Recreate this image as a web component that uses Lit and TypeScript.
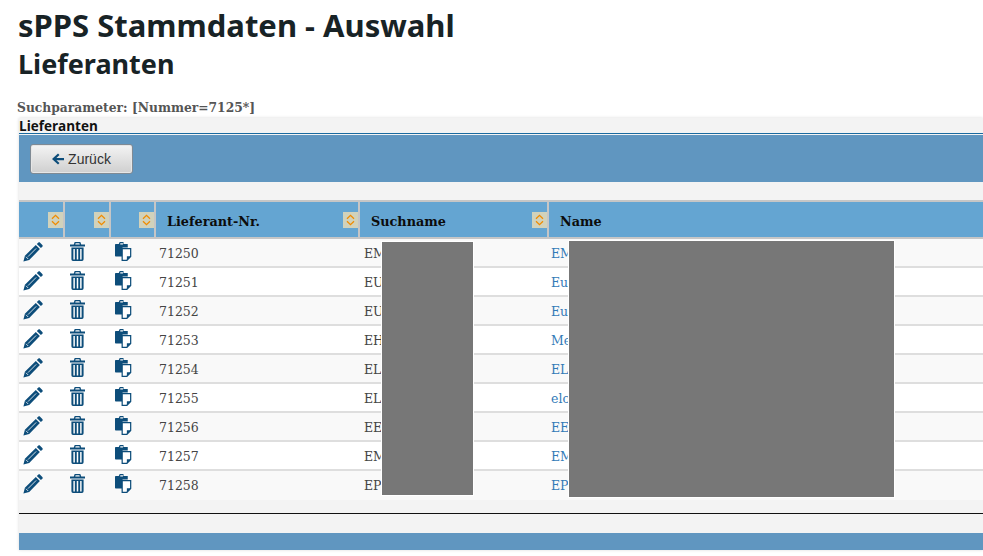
import { LitElement, css, html } from 'lit';
import { customElement } from 'lit/decorators.js';

const rows = [
  ['71250', 'EM', 'EM'],
  ['71251', 'EU', 'Eu'],
  ['71252', 'EU', 'Eu'],
  ['71253', 'EH', 'Me'],
  ['71254', 'EL', 'EL'],
  ['71255', 'EL', 'elc'],
  ['71256', 'EE', 'EE'],
  ['71257', 'EM', 'EM'],
  ['71258', 'EP', 'EP'],
];

const sortIcon = html`
  <span class="sort">
    <svg width="9" height="12" viewBox="0 0 9 12" fill="none" stroke="#f08c00" stroke-width="1.3">
      <path d="M1 4.8 4.5 1.4 8 4.8M1 7.2 4.5 10.6 8 7.2" />
    </svg>
  </span>
`;

const pencil = html`
  <svg class="ico" width="20" height="20" viewBox="0 0 20 20">
    <path fill="#0d4d7a" d="M.4 19.6 1.9 13.8 12.8 3 16.9 7.1 6.2 18.1ZM13.8 2 15.2.7C15.8.1 16.5.1 17.1.7L19.3 2.9C19.9 3.5 19.9 4.2 19.3 4.8L17.9 6.1Z" />
    <path fill="none" stroke="#fff" stroke-width=".8" d="M3 14.8 5.2 17M5 14.6 13.2 6.4" />
  </svg>
`;

const trash = html`
  <svg class="ico" width="15" height="19" viewBox="0 0 16 19" preserveAspectRatio="none">
    <path fill="#0d4d7a" d="M5 0H11L12 2.4H16V4.4H0V2.4H4ZM6 1.2 5.6 2.4H10.4L10 1.2Z" />
    <path fill="#0d4d7a" fill-rule="evenodd" d="M1.5 5.4H14.5V17C14.5 18.1 13.8 19 12.8 19H3.2C2.2 19 1.5 18.1 1.5 17ZM3.6 7V17.4H5.2V7ZM7.2 7V17.4H8.8V7ZM10.8 7V17.4H12.4V7Z" />
  </svg>
`;

const paste = html`
  <svg class="ico" width="17" height="19" viewBox="0 0 18 19" preserveAspectRatio="none">
    <path fill="#0d4d7a" d="M5 0H9V2H13.5V5.5H8V14.5H.8C.3 14.5 0 14.2 0 13.7V2.8C0 2.3.3 2 .8 2H4ZM5.6 1.2V2.6H8.4V1.2Z" />
    <path fill="#fff" stroke="#0d4d7a" stroke-width="1.3" d="M7.6 6.6H16.6V14.4L12.6 18.3H7.6Z" />
    <path fill="#0d4d7a" d="M12.6 18V14.2H16.6Z" />
  </svg>
`;

@customElement('app-root')
export class AppRoot extends LitElement {
  static styles = css`
    :host {
      display: block;
      height: 556px;
      overflow: hidden;
      background: #fff;
      font-family: 'DejaVu Serif', 'Liberation Serif', serif;
    }

    .page {
      padding: 7px 0 0 18px;
    }

    h1 {
      margin: 0;
      font: 700 31px/36px 'Noto Sans', sans-serif;
      color: #182326;
    }

    h2 {
      margin: 3px 0 0;
      font: 700 27px/36px 'Noto Sans', sans-serif;
      color: #182326;
    }

    .params {
      margin: 18px 0 0 -1px;
      font-size: 12.3px;
      line-height: 16px;
      font-weight: 700;
      color: #555;
      white-space: nowrap;
    }

    .panel {
      position: relative;
      margin-left: 1px;
      background: #f3f3f3;
      box-shadow: 0 0 3px rgba(0, 0, 0, 0.15);
    }

    .caption {
      height: 15px;
      border-bottom: 1px solid #1a6aa0;
      margin-top: 2px;
      font: 700 13.5px/17px 'Open Sans', sans-serif;
      color: #111;
    }

    .toolbar {
      margin-top: 1px;
      height: 47px;
      padding: 9px 0 0 11px;
      box-sizing: border-box;
      background: #6096c0;
    }

    .back {
      display: flex;
      align-items: center;
      justify-content: center;
      gap: 4px;
      width: 103px;
      height: 30px;
      padding: 0;
      box-sizing: border-box;
      border: 1px solid #7f8a94;
      border-radius: 3px;
      background: linear-gradient(#f4f4f4, #cfcfcf);
      box-shadow: inset 0 0 0 1px #e6e6e6;
      font: 14px 'Liberation Sans', sans-serif;
      color: #333;
    }

    .spacer {
      height: 18px;
    }

    .grid {
      display: grid;
      grid-template-columns: 46px 46px 45px 204px 189px 1fr;
    }

    .head {
      border-top: 2px solid #c6c6c6;
      border-bottom: 2px solid #c6c6c6;
    }

    .th {
      position: relative;
      height: 35px;
      background: #64a5d2;
      border-right: 2px solid #c6c6c6;
      font-size: 12.8px;
      font-weight: 700;
      line-height: 40px;
      color: #0c0c0c;
      white-space: nowrap;
    }

    .th:last-child {
      border-right: 0;
    }

    .sort {
      position: absolute;
      right: 0;
      top: 10px;
      display: flex;
      align-items: center;
      justify-content: center;
      width: 15px;
      height: 16px;
      background: #d1d2bb;
    }

    .row {
      height: 27px;
      border-bottom: 2px solid #dedede;
      background: #fff;
      font-size: 12.5px;
      line-height: 29px;
      color: #444;
    }

    .row.odd {
      background: #f9f9f9;
    }

    .row:last-child {
      border-bottom: 0;
      height: 29px;
    }

    .td {
      display: flex;
      align-items: center;
      white-space: nowrap;
    }

    .icon-cell {
      height: 25px;
      padding-left: 4px;
    }

    .icon-cell.wide {
      padding-left: 5px;
    }

    .link {
      color: #337ab7;
    }

    .foot {
      height: 33px;
      display: flex;
      flex-direction: column;
      justify-content: center;
    }

    .foot hr {
      width: 100%;
      margin: 0;
      border: 0;
      border-top: 1px solid #111;
      transform: translateY(-3px);
    }

    .bottom {
      height: 17px;
      background: #6096c0;
    }

    .redact {
      position: absolute;
      background: #777;
      outline: 1px solid #fff;
    }
  `;

  render() {
    return html`
      <div class="page">
        <h1>sPPS Stammdaten - Auswahl</h1>
        <h2>Lieferanten</h2>
        <div class="params">Suchparameter: [Nummer=7125*]</div>
        <div class="panel">
          <div class="caption">Lieferanten</div>
          <div class="toolbar">
            <button class="back">
              <svg width="12" height="12" viewBox="0 0 12 12">
                <path fill="#0d4d7a" d="M6 .6 7.5 2.1 4.4 5H12V7.2H4.4L7.5 10.1 6 11.6 0 6.1Z" />
              </svg>
              Zurück
            </button>
          </div>
          <div class="spacer"></div>
          <div class="grid head">
            <div class="th">${sortIcon}</div>
            <div class="th">${sortIcon}</div>
            <div class="th">${sortIcon}</div>
            <div class="th" style="padding-left:11px">Lieferant-Nr.${sortIcon}</div>
            <div class="th" style="padding-left:11px">Suchname${sortIcon}</div>
            <div class="th" style="padding-left:11px">Name</div>
          </div>
          <div>
            ${rows.map(
              (r, i) => html`
                <div class="grid row ${i % 2 === 0 ? 'odd' : ''}">
                  <div class="td icon-cell">${pencil}</div>
                  <div class="td icon-cell wide">${trash}</div>
                  <div class="td icon-cell">${paste}</div>
                  <div class="td" style="padding-left:3px">${r[0]}</div>
                  <div class="td" style="padding-left:4px">${r[1]}</div>
                  <div class="td link" style="padding-left:2px">${r[2]}</div>
                </div>
              `
            )}
          </div>
          <div class="foot"><hr /></div>
          <div class="bottom"></div>
          <div class="redact" style="left:363px;top:124px;width:91px;height:253px"></div>
          <div class="redact" style="left:550px;top:123px;width:325px;height:256px"></div>
        </div>
      </div>
    `;
  }
}
